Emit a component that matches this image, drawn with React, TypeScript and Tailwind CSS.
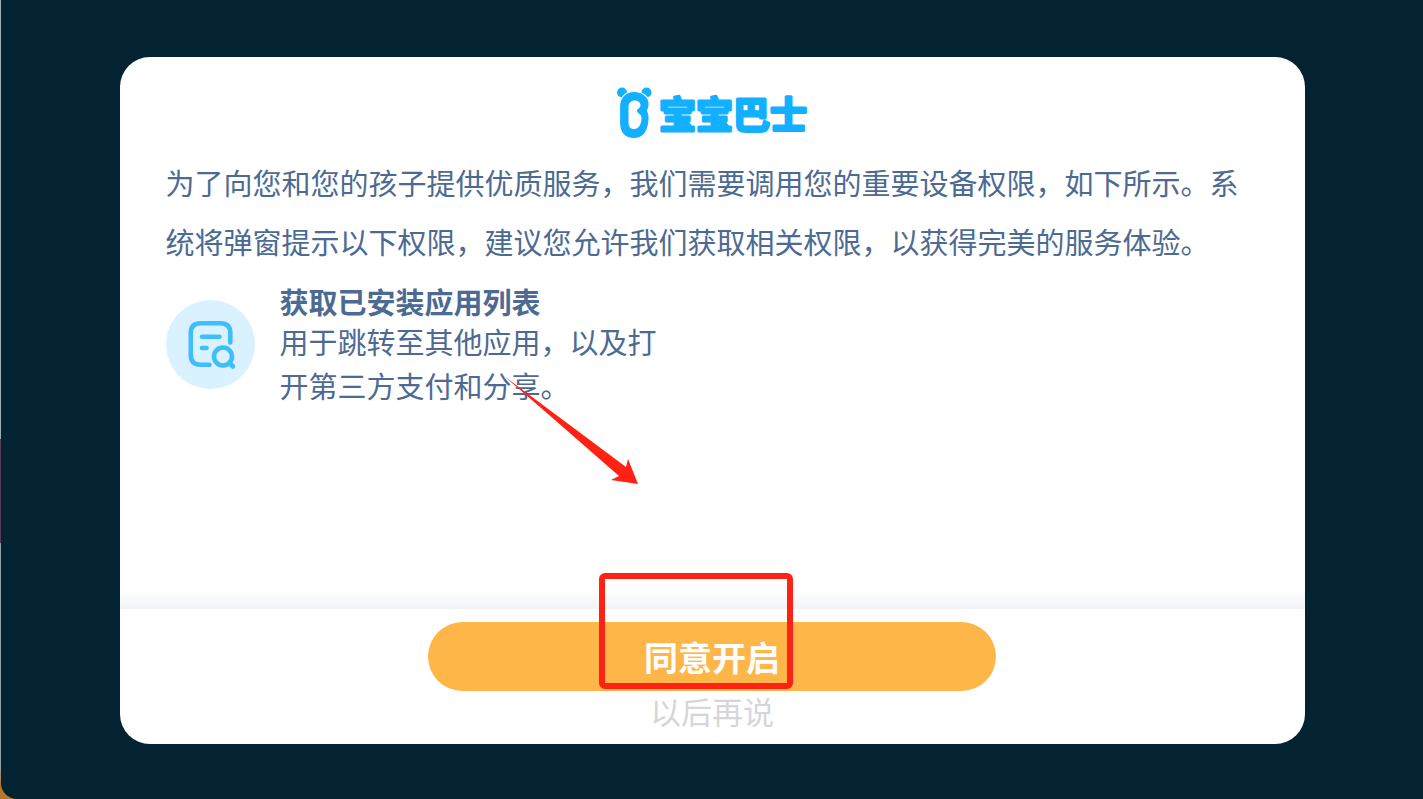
import { useState } from "react";

type Permission = {
  id: string;
  title: string;
  description: string;
};

const permissions: Permission[] = [
  {
    id: "installed-apps",
    title: "获取已安装应用列表",
    description: "用于跳转至其他应用，以及打开第三方支付和分享。",
  },
];

function Logo() {
  return (
    <svg width="192" height="56" viewBox="0 0 192 56" role="img" aria-label="宝宝巴士">
      {/* ears */}
      <circle cx="6" cy="7.5" r="5" fill="#12b0ff" />
      <circle cx="30.5" cy="7.5" r="5" fill="#12b0ff" />
      {/* head and body */}
      <path
        d="M18 6.500C26 6.500 33.200 11.500 33.200 19C33.200 22 32.500 24 31.500 26C33 28.500 33.500 31.500 33 35.500C32 46.500 27 53.500 18 53.500C8.500 53.500 3.500 47.500 3.500 38V22C3.500 12.500 9.500 6.500 18 6.500Z"
        fill="#12b0ff"
        stroke="#ffffff"
        strokeWidth="1.2"
      />
      <path
        d="M18.500 15.500C22 15.500 24.800 17.500 24.500 20.500C24.200 23.500 21 23.500 21 26C21 28.500 25.500 28.500 25.500 33C25.500 39.500 22.500 44 18 44C14 44 12.500 41.500 12.500 37V22C12.500 18 15 15.500 18.500 15.500Z"
        fill="#ffffff"
      />
      <text
        x="43"
        y="44"
        fontSize="37"
        fontWeight="700"
        fill="#12b0ff"
        stroke="#12b0ff"
        strokeWidth="3"
        strokeLinejoin="round"
        className="font-['Noto_Sans_CJK_SC',sans-serif]"
      >
        宝宝巴士
      </text>
    </svg>
  );
}

function AppListIcon() {
  return (
    <svg width="89" height="89" viewBox="0 0 89 89" fill="none" aria-hidden="true" className="mt-[17px] shrink-0">
      <circle cx="44.500" cy="44.500" r="44.500" fill="#daf2ff" />
      <g stroke="#3fbdfc" strokeWidth="4.6" strokeLinecap="round" strokeLinejoin="round">
        <path d="M64.300 42.500V33C64.300 26.500 61 23.200 54.500 23.200H34.500C28 23.200 24.800 26.500 24.800 33V55C24.800 61.500 28 64.700 34.500 64.700H43.500" />
        <path d="M36 36.800H53.500M36 48H40.500" />
        <circle cx="57" cy="56.500" r="9" />
        <path d="M63.500 63L67 66.500" />
      </g>
    </svg>
  );
}

function PermissionItem({ item }: { item: Permission }) {
  return (
    <li className="relative flex gap-[25px]">
      <AppListIcon />
      <div className="w-[380px]">
        <h2 className="font-bold leading-[36px]">{item.title}</h2>
        <p className="leading-[44px]">{item.description}</p>
      </div>
      {/* pointer towards the confirm button */}
      <svg
        width="134"
        height="108"
        viewBox="0 0 134 108"
        aria-hidden="true"
        className="pointer-events-none absolute left-[338px] top-[93px]"
      >
        <path d="M0 0L122 91L124 83L134 108L107 104L115 100L44 38Z" fill="#ff2113" />
      </svg>
    </li>
  );
}

export default function App() {
  const [open, setOpen] = useState(true);

  return (
    <div className="min-h-screen bg-[linear-gradient(#9fb0b5_0_55%,#573a5c_55%_68%,#8fa3ad_68%_96%,#b5772a_98%)] pl-px font-['Noto_Sans_CJK_SC',sans-serif]">
      <main className="flex min-h-screen items-center justify-center rounded-bl-2xl bg-[#032333] pt-0.5">
        {open && (
          <section
            role="dialog"
            aria-label="权限说明"
            className="flex min-h-[86vh] w-5/6 flex-col rounded-[30px] bg-white text-[29px] text-[#4c6a92]"
          >
            <div className="flex-1 px-[46px] pt-7">
              <h1 className="flex justify-center">
                <Logo />
              </h1>
              <p className="mt-3 leading-[59px]">
                为了向您和您的孩子提供优质服务，我们需要调用您的重要设备权限，如下所示。系统将弹窗提示以下权限，建议您允许我们获取相关权限，以获得完美的服务体验。
              </p>
              <ul className="mt-3">
                {permissions.map((p) => (
                  <PermissionItem key={p.id} item={p} />
                ))}
              </ul>
            </div>

            <div className="h-5 bg-linear-to-b from-white to-[#f1f3f7]" />

            <footer className="flex flex-col items-center px-6 pb-3.5 pt-[13px]">
              <div className="relative w-[568px] max-w-full">
                <button
                  onClick={() => setOpen(false)}
                  className="h-[69px] w-full rounded-full bg-[#ffb648] text-[34px] font-bold text-white"
                >
                  同意开启
                </button>
                <span className="pointer-events-none absolute -top-[49px] left-[171px] h-[116px] w-[194px] rounded-md border-6 border-[#ff2113]" />
              </div>
              <button onClick={() => setOpen(false)} className="text-[31px] leading-[39px] text-[#d5d6da]">
                以后再说
              </button>
            </footer>
          </section>
        )}
      </main>
    </div>
  );
}
